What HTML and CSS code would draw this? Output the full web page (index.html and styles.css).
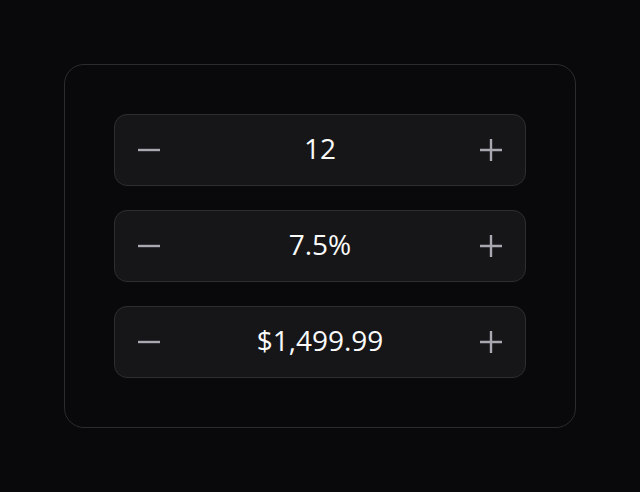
FILE: index.html
```html
<!DOCTYPE html>
<html>
<head>
<meta charset="utf-8">
<link rel="stylesheet" href="styles.css">
</head>
<body>
<div class="page">
  <div class="card">
    <div class="stepper">
      <button class="btn" aria-label="Decrease"><svg viewBox="0 0 22 22" width="22" height="22"><path d="M0 11H22" /></svg></button>
      <span class="value">12</span>
      <button class="btn" aria-label="Increase"><svg viewBox="0 0 22 22" width="22" height="22"><path d="M0 11H22M11 0V22" /></svg></button>
    </div>
    <div class="stepper">
      <button class="btn" aria-label="Decrease"><svg viewBox="0 0 22 22" width="22" height="22"><path d="M0 11H22" /></svg></button>
      <span class="value">7.5%</span>
      <button class="btn" aria-label="Increase"><svg viewBox="0 0 22 22" width="22" height="22"><path d="M0 11H22M11 0V22" /></svg></button>
    </div>
    <div class="stepper">
      <button class="btn" aria-label="Decrease"><svg viewBox="0 0 22 22" width="22" height="22"><path d="M0 11H22" /></svg></button>
      <span class="value">$1,499.99</span>
      <button class="btn" aria-label="Increase"><svg viewBox="0 0 22 22" width="22" height="22"><path d="M0 11H22M11 0V22" /></svg></button>
    </div>
  </div>
</div>
</body>
</html>
```
FILE: styles.css
```css
html, body {
  margin: 0;
  padding: 0;
  background: #09090b;
  font-family: "Open Sans", "Noto Sans", sans-serif;
}
.page {
  width: 640px;
  height: 492px;
  padding: 64px;
  box-sizing: border-box;
}
.card {
  width: 512px;
  height: 364px;
  box-sizing: border-box;
  border: 1px solid #2c2c30;
  border-radius: 20px;
  background: #09090b;
  padding: 49px;
  display: flex;
  flex-direction: column;
  gap: 24px;
}
.stepper {
  height: 72px;
  box-sizing: border-box;
  border: 1px solid #2e2e32;
  border-radius: 13px;
  background: #161618;
  display: flex;
  align-items: center;
  padding: 0 11px;
}
.btn {
  width: 46px;
  height: 46px;
  border: none;
  background: transparent;
  padding: 0;
  display: flex;
  align-items: center;
  justify-content: center;
  cursor: pointer;
}
.btn svg path {
  stroke: #a8a8b0;
  stroke-width: 2.4;
  fill: none;
}
.value {
  flex: 1;
  text-align: center;
  color: #fafafa;
  font-size: 28px;
  line-height: 1;
  padding-bottom: 5px;
}
```
